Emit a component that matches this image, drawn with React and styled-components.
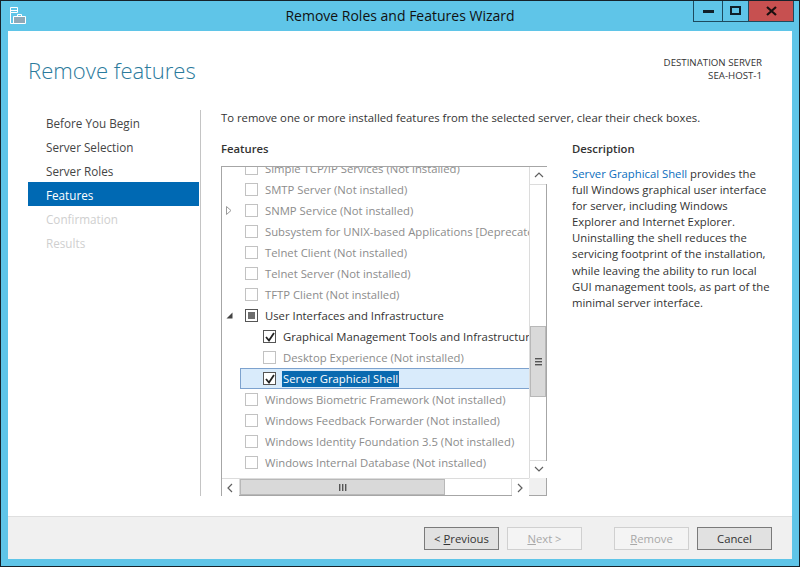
import styled, { createGlobalStyle } from "styled-components";

const GlobalStyle = createGlobalStyle`
  html, body { margin: 0; padding: 0; background: #5fc5e8; }
  * { box-sizing: border-box; }
  body { font-family: "Open Sans", "Noto Sans", sans-serif; font-size: 11.3px; color: #333; }
`;

const features = [
  { label: "Simple TCP/IP Services (Not installed)", disabled: true },
  { label: "SMTP Server (Not installed)", disabled: true },
  { label: "SNMP Service (Not installed)", disabled: true, expander: "closed" },
  { label: "Subsystem for UNIX-based Applications [Deprecated]", disabled: true },
  { label: "Telnet Client (Not installed)", disabled: true },
  { label: "Telnet Server (Not installed)", disabled: true },
  { label: "TFTP Client (Not installed)", disabled: true },
  { label: "User Interfaces and Infrastructure", expander: "open", state: "partial" },
  { label: "Graphical Management Tools and Infrastructure", level: 1, state: "checked" },
  { label: "Desktop Experience (Not installed)", level: 1, disabled: true },
  { label: "Server Graphical Shell", level: 1, state: "checked", selected: true },
  { label: "Windows Biometric Framework (Not installed)", disabled: true },
  { label: "Windows Feedback Forwarder (Not installed)", disabled: true },
  { label: "Windows Identity Foundation 3.5 (Not installed)", disabled: true },
  { label: "Windows Internal Database (Not installed)", disabled: true },
];

const steps = [
  { label: "Before You Begin" },
  { label: "Server Selection" },
  { label: "Server Roles" },
  { label: "Features", active: true },
  { label: "Confirmation", disabled: true },
  { label: "Results", disabled: true },
];

const Chevron = ({ dir }) => {
  const d = { up: "M1 6 L5 2 L9 6", down: "M1 2 L5 6 L9 2", left: "M6 1 L2 5 L6 9", right: "M2 1 L6 5 L2 9" }[dir];
  return (
    <svg width="10" height="10" viewBox="0 0 10 10" style={{ display: "block" }}>
      <path d={d} fill="none" stroke="#606060" strokeWidth="1.2" />
    </svg>
  );
};

const Grip = ({ vertical }) => (
  <svg width="9" height="9" viewBox="0 0 9 9" style={{ display: "block" }}>
    {[0, 3, 6].map((o) =>
      vertical ? (
        <rect key={o} x="1" y={o + 1} width="7" height="1.4" fill="#555" />
      ) : (
        <rect key={o} x={o + 1} y="1" width="1.4" height="7" fill="#555" />
      )
    )}
  </svg>
);

const Expander = ({ kind }) =>
  kind === "open" ? (
    <svg width="7" height="7" viewBox="0 0 7 7" style={{ display: "block" }}>
      <path d="M6.5 0.5 V6.5 H0.5 Z" fill="#444" />
    </svg>
  ) : (
    <svg width="6" height="9" viewBox="0 0 6 9" style={{ display: "block" }}>
      <path d="M0.5 0.5 L5 4.5 L0.5 8.5 Z" fill="#fff" stroke="#9a9a9a" />
    </svg>
  );

export default function App() {
  return (
    <>
      <GlobalStyle />
      <Window>
        <TitleBar>
          <AppIcon>
            <svg width="16" height="18" viewBox="0 0 16 18">
              <path d="M0.5 0.5 H7.5 V5.5 H0.5 Z M0.5 5.5 V16.5 H4" fill="none" stroke="#fff" />
              <rect x="1" y="3" width="6" height="1" fill="#fff" />
              <path d="M3.5 9.5 H15.5 V16.5 H3.5 Z" fill="#8fa9b8" stroke="#fff" />
              <path d="M7.5 9.5 V7.5 H11.5 V9.5" fill="none" stroke="#fff" />
            </svg>
          </AppIcon>
          <Title>Remove Roles and Features Wizard</Title>
          <Caption>
            <CaptionButton $w={28} $first>
              <svg width="11" height="4"><rect width="11" height="3" y="1" fill="#10202a" /></svg>
            </CaptionButton>
            <CaptionButton $w={26}>
              <svg width="11" height="9"><rect x="1" y="1" width="9" height="7" fill="none" stroke="#10202a" strokeWidth="2" /></svg>
            </CaptionButton>
            <CaptionButton $w={45} $close>
              <svg width="11" height="10" viewBox="0 0 11 10">
                <path d="M1 1 L10 9 M10 1 L1 9" stroke="#1a1010" strokeWidth="2.2" />
              </svg>
            </CaptionButton>
          </Caption>
        </TitleBar>

        <Panel>
          <Header>
            <Heading>Remove features</Heading>
            <Destination>
              <div>DESTINATION SERVER</div>
              <div>SEA-HOST-1</div>
            </Destination>
          </Header>

          <Body>
            <Nav>
              {steps.map((s) => (
                <NavItem key={s.label} $active={s.active} $disabled={s.disabled}>
                  {s.label}
                </NavItem>
              ))}
            </Nav>

            <Main>
              <Intro>To remove one or more installed features from the selected server, clear their check boxes.</Intro>
              <Columns>
                <FeatureColumn>
                  <SectionLabel>Features</SectionLabel>
                  <ListBox>
                    <ListViewport>
                      <ListInner>
                        {features.map((f) => (
                          <Row key={f.label} $level={f.level || 0} $selected={f.selected}>
                            <ExpanderSlot>{f.expander && <Expander kind={f.expander} />}</ExpanderSlot>
                            <CheckBox $disabled={f.disabled} $selected={f.selected}>
                              {f.state === "checked" && (
                                <svg width="10" height="10" viewBox="0 0 10 10">
                                  <path d="M1 5 L4 8.5 L9 1" fill="none" stroke="#222" strokeWidth="1.8" />
                                </svg>
                              )}
                              {f.state === "partial" && <PartialMark />}
                            </CheckBox>
                            <RowLabel $disabled={f.disabled} $selected={f.selected}>{f.label}</RowLabel>
                          </Row>
                        ))}
                      </ListInner>
                    </ListViewport>
                    <VScroll>
                      <ScrollArrow><Chevron dir="up" /></ScrollArrow>
                      <VTrack>
                        <VThumb><Grip vertical /></VThumb>
                      </VTrack>
                      <ScrollArrow><Chevron dir="down" /></ScrollArrow>
                    </VScroll>
                    <HScroll>
                      <ScrollArrow><Chevron dir="left" /></ScrollArrow>
                      <HTrack>
                        <HThumb><Grip /></HThumb>
                      </HTrack>
                      <ScrollArrow><Chevron dir="right" /></ScrollArrow>
                    </HScroll>
                    <ScrollCorner />
                  </ListBox>
                </FeatureColumn>

                <Description>
                  <SectionLabel>Description</SectionLabel>
                  <DescriptionText>
                    <DescLink>Server Graphical Shell</DescLink> provides the full Windows graphical user interface
                    for server, including Windows Explorer and Internet Explorer. Uninstalling the shell reduces the
                    servicing footprint of the installation, while leaving the ability to run local GUI management
                    tools, as part of the minimal server interface.
                  </DescriptionText>
                </Description>
              </Columns>
            </Main>
          </Body>

          <Footer>
            <WizardButton $strong><span>&lt; <u>P</u>revious</span></WizardButton>
            <WizardButton $disabled><span><u>N</u>ext &gt;</span></WizardButton>
            <WizardButton $disabled $gapLeft><span><u>R</u>emove</span></WizardButton>
            <WizardButton $strong>Cancel</WizardButton>
          </Footer>
        </Panel>
      </Window>
    </>
  );
}

const Window = styled.div`
  width: 800px;
  height: 567px;
  display: flex;
  flex-direction: column;
  background: #5fc5e8;
  border: 1px solid #16232b;
  overflow: hidden;
`;

const TitleBar = styled.div`
  height: 30px;
  flex: none;
  position: relative;
  display: flex;
  justify-content: center;
`;

const AppIcon = styled.div`
  position: absolute;
  left: 9px;
  top: 6px;
`;

const Title = styled.div`
  font-size: 14px;
  line-height: 30px;
  color: #111;
`;

const Caption = styled.div`
  position: absolute;
  right: 5px;
  top: -1px;
  height: 22px;
  display: flex;
  border: 1px solid #1d4a5e;
  border-top: 0;
`;

const CaptionButton = styled.div`
  width: ${(p) => p.$w}px;
  display: flex;
  align-items: center;
  justify-content: center;
  background: ${(p) => (p.$close ? "#c75050" : "transparent")};
  border-left: ${(p) => (p.$first ? "0" : "1px solid #1d4a5e")};
`;

const Panel = styled.div`
  flex: 1;
  margin: 0 7px 7px;
  background: #fff;
  display: flex;
  flex-direction: column;
  min-height: 0;
`;

const Header = styled.div`
  height: 79px;
  flex: none;
  display: flex;
  justify-content: space-between;
  padding: 23px 30px 0 20px;
`;

const Heading = styled.h1`
  margin: 0;
  font-size: 22.1px;
  font-weight: 300;
  line-height: 32px;
  color: #2a7a9c;
`;

const Destination = styled.div`
  text-align: right;
  font-size: 9.7px;
  line-height: 13px;
  padding-top: 2px;
  color: #333;
`;

const Body = styled.div`
  flex: 1;
  min-height: 0;
  display: flex;
  padding-left: 20px;
`;

const Nav = styled.nav`
  width: 172px;
  flex: none;
  height: 386px;
  padding-right: 1px;
  font-size: 11.7px;
`;

const NavItem = styled.div`
  height: 24px;
  line-height: 26px;
  padding-left: 18px;
  background: ${(p) => (p.$active ? "#0069b3" : "transparent")};
  color: ${(p) => (p.$active ? "#fff" : p.$disabled ? "#cfcfcf" : "#444")};
`;

const Main = styled.div`
  width: 562px;
  height: 386px;
  border-left: 1px solid #c4c4c4;
  padding-left: 20px;
`;

const Intro = styled.div`
  line-height: 16px;
  margin-bottom: 15px;
  color: #333;
  white-space: nowrap;
`;

const Columns = styled.div`
  display: flex;
  gap: 25px;
`;

const FeatureColumn = styled.div`
  width: 326px;
  flex: none;
`;

const SectionLabel = styled.div`
  font-weight: 600;
  line-height: 16px;
  margin-bottom: 9px;
  color: #333;
`;

const ListBox = styled.div`
  width: 326px;
  height: 330px;
  border: 1px solid #a6a6a6;
  display: grid;
  grid-template-columns: 1fr 17px;
  grid-template-rows: 1fr 17px;
`;

const ListViewport = styled.div`
  overflow: hidden;
  min-width: 0;
  min-height: 0;
`;

const ListInner = styled.div`
  margin-top: -9px;
`;

const Row = styled.div`
  height: 21px;
  display: flex;
  align-items: center;
  white-space: nowrap;
  padding-left: ${(p) => 4 + p.$level * 18}px;
  ${(p) =>
    p.$selected &&
    `
    background: #d9ebfb;
    box-shadow: inset 0 1px 0 #7da2ce, inset 0 -1px 0 #7da2ce, inset 1px 0 0 #7da2ce;
    margin-left: 18px;
    padding-left: 4px;
  `}
`;

const ExpanderSlot = styled.span`
  width: 19px;
  flex: none;
  display: flex;
  justify-content: flex-start;
`;

const CheckBox = styled.span`
  width: 13px;
  height: 13px;
  flex: none;
  display: flex;
  align-items: center;
  justify-content: center;
  margin-right: ${(p) => (p.$selected ? "6px" : "7px")};
  background: #fff;
  border: 1px solid ${(p) => (p.$disabled ? "#c2c2c2" : "#555")};
`;

const PartialMark = styled.span`
  width: 7px;
  height: 7px;
  background: #6e6e6e;
`;

const RowLabel = styled.span`
  line-height: 16px;
  padding: 0 ${(p) => (p.$selected ? "1px" : "0")};
  color: ${(p) => (p.$selected ? "#fff" : p.$disabled ? "#8c8c8c" : "#333")};
  background: ${(p) => (p.$selected ? "#0a6ab0" : "transparent")};
`;

const VScroll = styled.div`
  display: flex;
  flex-direction: column;
  border-left: 1px solid #dcdcdc;
  min-height: 0;
`;

const HScroll = styled.div`
  display: flex;
  border-top: 1px solid #dcdcdc;
  min-width: 0;
`;

const ScrollArrow = styled.div`
  width: 17px;
  height: 17px;
  flex: none;
  display: flex;
  align-items: center;
  justify-content: center;
  background: #fff;
`;

const VTrack = styled.div`
  flex: 1;
  padding-top: 141px;
  border-top: 1px solid #dcdcdc;
  border-bottom: 1px solid #dcdcdc;
`;

const VThumb = styled.div`
  height: 71px;
  background: #d9d9d9;
  border: 1px solid #b8b8b8;
  display: flex;
  align-items: center;
  justify-content: center;
`;

const HTrack = styled.div`
  flex: 1;
  border-left: 1px solid #dcdcdc;
  border-right: 1px solid #dcdcdc;
`;

const HThumb = styled.div`
  width: 205px;
  height: 100%;
  background: #d9d9d9;
  border: 1px solid #b8b8b8;
  display: flex;
  align-items: center;
  justify-content: center;
`;

const ScrollCorner = styled.div`
  background: #f0f0f0;
`;

const Description = styled.div`
  width: 200px;
  flex: none;
`;

const DescriptionText = styled.div`
  line-height: 16.1px;
  color: #333;
`;

const DescLink = styled.span`
  color: #0a6ebd;
`;

const Footer = styled.div`
  height: 43px;
  flex: none;
  background: #f0f0f0;
  border-top: 1px solid #dfdfdf;
  display: flex;
  align-items: center;
  justify-content: flex-end;
  gap: 8px;
  padding: 0 20px 0 0;
`;

const WizardButton = styled.div`
  width: 75px;
  height: 23px;
  display: flex;
  align-items: center;
  justify-content: center;
  margin-left: ${(p) => (p.$gapLeft ? "24px" : "0")};
  background: ${(p) => (p.$disabled ? "#f4f4f4" : "#e1e1e1")};
  border: 1px solid ${(p) => (p.$disabled ? "#d0d0d0" : "#7a7a7a")};
  color: ${(p) => (p.$disabled ? "#a8a8a8" : "#333")};
`;
